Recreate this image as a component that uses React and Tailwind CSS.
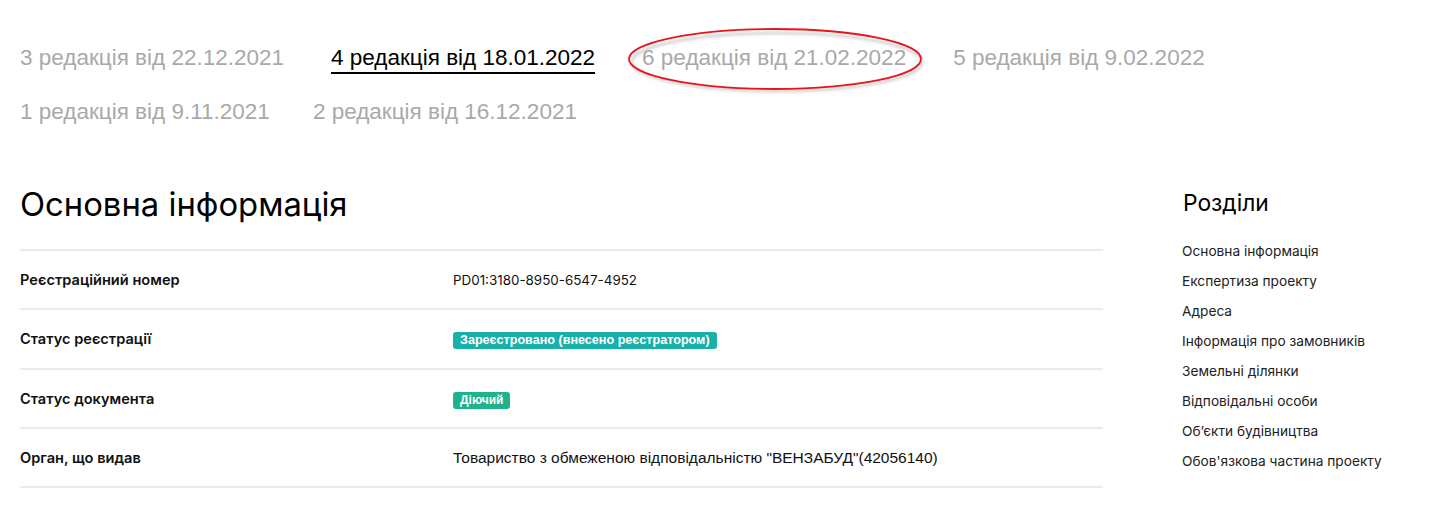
import React from 'react'

const TABS_ROW_1 = [
  { label: '3 редакція від 22.12.2021' },
  { label: '4 редакція від 18.01.2022', active: true },
  { label: '6 редакція від 21.02.2022', circled: true },
  { label: '5 редакція від 9.02.2022' },
]

const TABS_ROW_2 = [
  { label: '1 редакція від 9.11.2021' },
  { label: '2 редакція від 16.12.2021' },
]

const SECTIONS = [
  'Основна інформація',
  'Експертиза проекту',
  'Адреса',
  'Інформація про замовників',
  'Земельні ділянки',
  'Відповідальні особи',
  "Об’єкти будівництва",
  "Обов'язкова частина проекту",
]

function Tab({ label, active, circled }) {
  return (
    <div className="relative">
      <span
        className={`block text-[22.5px] leading-6 pb-[2px] border-b-2 whitespace-nowrap ${
          active ? 'text-black border-black' : 'text-[#a9a9a9] border-transparent'
        }`}
      >
        {label}
      </span>
      {circled && (
        // red annotation drawn over the tab
        <svg
          className="absolute left-[-15px] top-[-20px] pointer-events-none"
          width="302"
          height="72"
          viewBox="0 0 302 72"
        >
          <defs>
            <filter id="sh" x="-10%" y="-20%" width="120%" height="160%">
              <feGaussianBlur stdDeviation="1.5" />
            </filter>
          </defs>
          <ellipse cx="150" cy="36" rx="145" ry="29" fill="none" stroke="#9a9a9a" strokeOpacity="0.6" strokeWidth="2" filter="url(#sh)" />
          <ellipse cx="148" cy="33" rx="146" ry="30" fill="none" stroke="#e8141c" strokeWidth="1.8" />
        </svg>
      )}
    </div>
  )
}

function Badge({ children, color, size }) {
  return (
    <span
      className={`inline-block ${color} ${size} text-white font-bold leading-[17px] px-[7px] rounded-[3px] whitespace-nowrap`}
      style={{ fontFamily: '"Liberation Sans", Arial, sans-serif' }}
    >
      {children}
    </span>
  )
}

function Row({ label, children }) {
  return (
    <div className="flex items-center h-[59.25px] border-b-2 border-[#e8ecf0]">
      <div className="w-[433px] shrink-0 pt-[3px] text-[14.6px] font-semibold text-[#111]">{label}</div>
      <div className="pt-[1px] text-[13.4px] text-[#111]">{children}</div>
    </div>
  )
}

export default function App() {
  return (
    <div
      className="w-[1443px] h-[507px] bg-white overflow-hidden pl-[20px] pt-[46px]"
      style={{ fontFamily: 'Inter, "Noto Sans", sans-serif' }}
    >
      {/* Revisions */}
      <div style={{ fontFamily: '"Liberation Sans", Arial, sans-serif' }}>
        <div className="flex gap-x-[47px]">
          {TABS_ROW_1.map((t) => (
            <Tab key={t.label} {...t} />
          ))}
        </div>
        <div className="flex gap-x-[43px] mt-[26px]">
          {TABS_ROW_2.map((t) => (
            <Tab key={t.label} {...t} />
          ))}
        </div>
      </div>

      <div className="flex mt-[60px]">
        {/* Main info */}
        <div className="w-[1083px] shrink-0">
          <h1 className="text-[32.8px] leading-9 font-normal text-black -mt-[2px] mb-[2px]">Основна інформація</h1>
          <div className="mt-[27px] border-t-2 border-[#e8ecf0]">
            <Row label="Реєстраційний номер">PD01:3180-8950-6547-4952</Row>
            <Row label="Статус реєстрації">
              <Badge color="bg-[#19b0aa]" size="text-[12.6px]">Зареєстровано (внесено реєстратором)</Badge>
            </Row>
            <Row label="Статус документа">
              <Badge color="bg-[#1fb38d]" size="text-[12px]">Діючий</Badge>
            </Row>
            <Row label="Орган, що видав">
              <span className="text-[15.5px]" style={{ fontFamily: '"Liberation Sans", Arial, sans-serif' }}>
                Товариство з обмеженою відповідальністю "ВЕНЗАБУД"(42056140)
              </span>
            </Row>
          </div>
        </div>

        {/* Sections */}
        <div className="ml-[80px]">
          <h2 className="text-[22.8px] leading-[30px] font-normal text-black">Розділи</h2>
          <ul className="mt-[24px] flex flex-col gap-[12px]">
            {SECTIONS.map((s) => (
              <li key={s} className="text-[13.7px] leading-[18px] text-[#222] -ml-px">
                {s}
              </li>
            ))}
          </ul>
        </div>
      </div>
    </div>
  )
}
